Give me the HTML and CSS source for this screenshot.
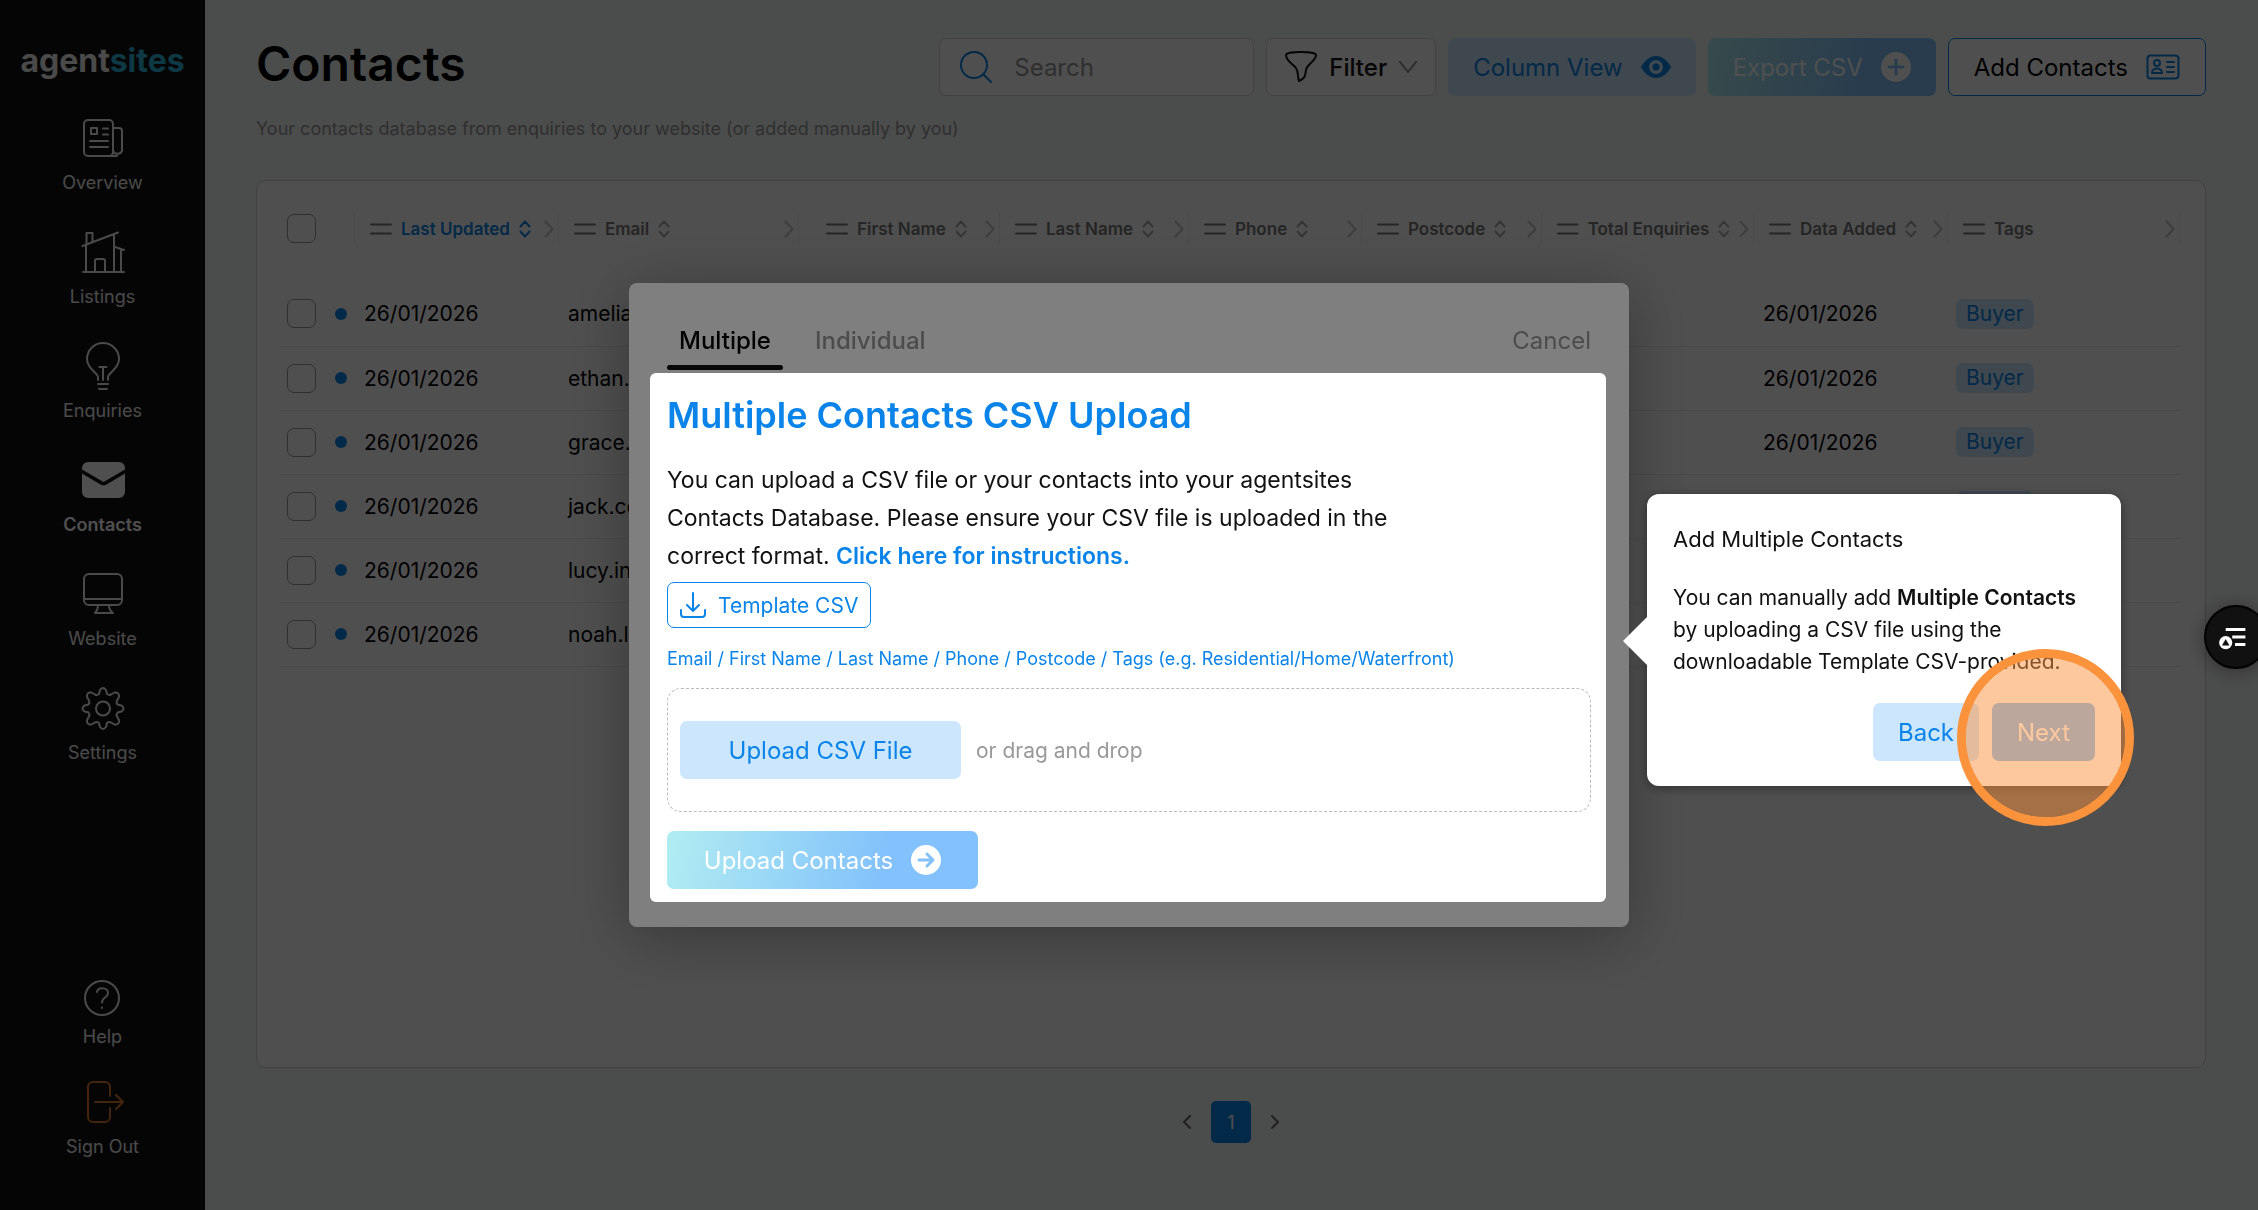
FILE: index.html
```
<!DOCTYPE html>
<html lang="en">
<head>
    <meta charset="UTF-8">
    <meta name="viewport" content="width=device-width, initial-scale=1.0">
    <title>Contacts - agentsites</title>
    <link rel="stylesheet" href="styles.css">
</head>
<body>
    <svg class="sprite" aria-hidden="true">
        <symbol id="i-sort" viewBox="0 0 12 18"><path d="M1.5 6.5 6 1.5l4.500 5M1.500 11.500l4.500 5 4.500-5"/></symbol>
        <symbol id="i-next" viewBox="0 0 10 18"><path d="M1.500 1.500 8.500 9l-7 7.500"/></symbol>
        <symbol id="i-grip" viewBox="0 0 22 12"><path d="M1 1.500h20M1 10.500h20"/></symbol>
    </svg>

    <div class="app">
        <aside class="sidebar">
            <a class="logo" href="#">agent<span>sites</span></a>
            <nav class="nav">
                <a class="nav-item" href="#">
                    <svg class="nav-icon" viewBox="0 0 48 48"><rect x="5" y="6" width="29" height="36" rx="4"/><path d="M34 14h6a3 3 0 0 1 3 3v20a5 5 0 0 1-9 0M12 14h6v6h-6zM24 14.500h5M24 20.500h5M11 27h18M11 33h18M30 42h8"/></svg>
                    <span>Overview</span>
                </a>
                <a class="nav-item" href="#">
                    <svg class="nav-icon" viewBox="0 0 48 48"><path d="M4 44h41M3.500 18 39 4.500M7 17v27M7.500 16V5h6v8.500M35 6v38M36 19l9 3M42 22v22M16 44V33a2 2 0 0 1 2-2h6a2 2 0 0 1 2 2v11"/></svg>
                    <span>Listings</span>
                </a>
                <a class="nav-item" href="#">
                    <svg class="nav-icon" viewBox="0 0 48 48"><path d="M19 38v-3c0-4-11-8-11-18a16 16 0 0 1 32 0c0 10-11 14-11 18v3M24 38V25M20.500 25h7M19 42h10M20 47h8"/></svg>
                    <span>Enquiries</span>
                </a>
                <a class="nav-item active" href="#">
                    <svg class="nav-icon solid" viewBox="0 0 48 48"><path d="M3 12a6 6 0 0 1 6-6h31a6 6 0 0 1 6 6v1.500L24.500 26 3 13.500z"/><path d="M3 17.500l18.500 11a6 6 0 0 0 6 0L46 17.500V36a6 6 0 0 1-6 6H9a6 6 0 0 1-6-6z"/></svg>
                    <span>Contacts</span>
                </a>
                <a class="nav-item" href="#">
                    <svg class="nav-icon" viewBox="0 0 48 48"><rect x="5" y="4" width="38" height="31" rx="5"/><path d="M5 29h38M19 35c0 4-1 6-3 8h18c-3-2-4-4-4-8"/></svg>
                    <span>Website</span>
                </a>
                <a class="nav-item" href="#">
                    <svg class="nav-icon" viewBox="0 0 48 48"><path d="M21 6q3-4 6 0l1 4q2 1.500 4 .5l3.500-2q5-.5 4.500 4.500l-2 3.500q-1 2 .5 4l4 1q4 3 0 6l-4 1q-1.500 2-.5 4l2 3.500q.5 5-4.500 4.500l-3.500-2q-2-1-4 .5l-1 4q-3 4-6 0l-1-4q-2-1.500-4-.5l-3.500 2q-5 .5-4.500-4.500l2-3.500q1-2-.5-4l-4-1q-4-3 0-6l4-1q1.500-2 .5-4l-2-3.500q-.5-5 4.500-4.500l3.500 2q2 1 4-.5z"/><circle cx="24" cy="24.500" r="7"/></svg>
                    <span>Settings</span>
                </a>
            </nav>
            <nav class="nav nav-bottom">
                <a class="nav-item help" href="#">
                    <svg class="nav-icon" viewBox="0 0 36 36"><circle cx="18" cy="18" r="17"/><path d="M13 12c1-5 11-5 11 1 0 5-6 4-6 9.500M18 27.500v.5"/></svg>
                    <span>Help</span>
                </a>
                <a class="nav-item sign-out" href="#">
                    <svg class="nav-icon" viewBox="0 0 48 48"><path d="M32 18V9a5 5 0 0 0-5-5H15a5 5 0 0 0-5 5v30a5 5 0 0 0 5 5h12a5 5 0 0 0 5-5v-9M17 24h28M38 17l7 7-7 7"/></svg>
                    <span>Sign Out</span>
                </a>
            </nav>
        </aside>

        <main class="main">
            <header class="page-head">
                <h1>Contacts</h1>
                <div class="toolbar">
                    <label class="search">
                        <svg class="icon" viewBox="0 0 32 32"><circle cx="14" cy="14" r="13"/><path d="M23 23l8 8"/></svg>
                        <input type="search" placeholder="Search" aria-label="Search">
                    </label>
                    <button class="btn btn-plain btn-filter">
                        <svg class="icon" viewBox="0 0 32 32"><path d="M1 4c0-4 30-4 30 0 0 6-9 9-10 15-1 5 0 8-7 11-2-5 0-9-3-13C8 13 1 10 1 4z"/></svg>
                        Filter
                        <svg class="caret" viewBox="0 0 18 12"><path d="M1 1l8 10 8-10"/></svg>
                    </button>
                    <button class="btn btn-soft">
                        Column View
                        <svg class="icon solid" viewBox="0 0 30 30"><path fill-rule="evenodd" d="M0 15C4 8 9 4 15 4s11 4 15 11c-4 7-9 11-15 11S4 22 0 15zm15-7a7 7 0 1 0 0 14 7 7 0 0 0 0-14z"/><circle cx="15" cy="15" r="3.500"/></svg>
                    </button>
                    <button class="btn btn-grad">
                        Export CSV
                        <svg class="icon" viewBox="0 0 30 30"><circle class="disc" cx="15" cy="15" r="15"/><path class="mark" d="M15 8v14M8 15h14"/></svg>
                    </button>
                    <button class="btn btn-outline">
                        Add Contacts
                        <svg class="icon card-icon" viewBox="0 0 34 26"><rect x="1.500" y="1.500" width="31" height="23" rx="3"/><circle cx="11" cy="9" r="3"/><path d="M6 19c0-6 10-6 10 0zM21 8h7M21 13h7M21 18h7"/></svg>
                    </button>
                </div>
            </header>
            <p class="subtitle">Your contacts database from enquiries to your website (or added manually by you)</p>

            <section class="card">
                <table class="contacts">
                    <colgroup>
                        <col class="c-check"><col class="c-updated"><col class="c-email"><col class="c-first"><col class="c-last"><col class="c-phone"><col class="c-post"><col class="c-total"><col class="c-added"><col>
                    </colgroup>
                    <thead>
                        <tr>
                            <th><input type="checkbox" aria-label="Select all"></th>
                            <th class="sorted"><div class="th"><svg class="grip"><use href="#i-grip"/></svg>Last Updated<svg class="sort"><use href="#i-sort"/></svg><svg class="next"><use href="#i-next"/></svg></div></th>
                            <th><div class="th"><svg class="grip"><use href="#i-grip"/></svg>Email<svg class="sort"><use href="#i-sort"/></svg><svg class="next"><use href="#i-next"/></svg></div></th>
                            <th class="wide"><div class="th"><svg class="grip"><use href="#i-grip"/></svg>First Name<svg class="sort"><use href="#i-sort"/></svg><svg class="next"><use href="#i-next"/></svg></div></th>
                            <th><div class="th"><svg class="grip"><use href="#i-grip"/></svg>Last Name<svg class="sort"><use href="#i-sort"/></svg><svg class="next"><use href="#i-next"/></svg></div></th>
                            <th><div class="th"><svg class="grip"><use href="#i-grip"/></svg>Phone<svg class="sort"><use href="#i-sort"/></svg><svg class="next"><use href="#i-next"/></svg></div></th>
                            <th><div class="th"><svg class="grip"><use href="#i-grip"/></svg>Postcode<svg class="sort"><use href="#i-sort"/></svg><svg class="next"><use href="#i-next"/></svg></div></th>
                            <th><div class="th"><svg class="grip"><use href="#i-grip"/></svg>Total Enquiries<svg class="sort"><use href="#i-sort"/></svg><svg class="next"><use href="#i-next"/></svg></div></th>
                            <th><div class="th"><svg class="grip"><use href="#i-grip"/></svg>Data Added<svg class="sort"><use href="#i-sort"/></svg><svg class="next"><use href="#i-next"/></svg></div></th>
                            <th><div class="th"><svg class="grip"><use href="#i-grip"/></svg>Tags<svg class="next"><use href="#i-next"/></svg></div></th>
                        </tr>
                    </thead>
                    <tbody>
                        <tr><td><div class="pick"><input type="checkbox" aria-label="Select amelia"><i class="dot"></i></div></td><td>26/01/2026</td><td>amelia</td><td></td><td></td><td></td><td></td><td></td><td>26/01/2026</td><td><span class="tag">Buyer</span></td></tr>
                        <tr><td><div class="pick"><input type="checkbox" aria-label="Select ethan"><i class="dot"></i></div></td><td>26/01/2026</td><td>ethan.</td><td></td><td></td><td></td><td></td><td></td><td>26/01/2026</td><td><span class="tag">Buyer</span></td></tr>
                        <tr><td><div class="pick"><input type="checkbox" aria-label="Select grace"><i class="dot"></i></div></td><td>26/01/2026</td><td>grace.</td><td></td><td></td><td></td><td></td><td></td><td>26/01/2026</td><td><span class="tag">Buyer</span></td></tr>
                        <tr><td><div class="pick"><input type="checkbox" aria-label="Select jack"><i class="dot"></i></div></td><td>26/01/2026</td><td>jack.co</td><td></td><td></td><td></td><td></td><td></td><td>26/01/2026</td><td><span class="tag">Buyer</span></td></tr>
                        <tr><td><div class="pick"><input type="checkbox" aria-label="Select lucy"><i class="dot"></i></div></td><td>26/01/2026</td><td>lucy.in</td><td></td><td></td><td></td><td></td><td></td><td>26/01/2026</td><td><span class="tag">Buyer</span></td></tr>
                        <tr><td><div class="pick"><input type="checkbox" aria-label="Select noah"><i class="dot"></i></div></td><td>26/01/2026</td><td>noah.l</td><td></td><td></td><td></td><td></td><td></td><td>26/01/2026</td><td><span class="tag">Buyer</span></td></tr>
                    </tbody>
                </table>
            </section>

            <div class="pager">
                <button aria-label="Previous page"><svg viewBox="0 0 10 14"><path d="M8 1L2 7l6 6"/></svg></button>
                <button class="current">1</button>
                <button aria-label="Next page"><svg viewBox="0 0 10 14"><path d="M2 1l6 6-6 6"/></svg></button>
            </div>
        </main>
    </div>

    <div class="backdrop">
        <div class="modal" role="dialog" aria-label="Add contacts">
            <div class="modal-head">
                <button class="tab active">Multiple</button>
                <button class="tab">Individual</button>
                <button class="cancel">Cancel</button>
            </div>
            <div class="panel">
                <h2>Multiple Contacts CSV Upload</h2>
                <p class="intro">You can upload a CSV file or your contacts into your agentsites Contacts Database. Please ensure your CSV file is uploaded in the correct format. <a href="#">Click here for instructions.</a></p>
                <button class="btn-template">
                    <svg viewBox="0 0 26 26"><path d="M13 1v18M7 13l6 6 6-6M1 18v4a3 3 0 0 0 3 3h18a3 3 0 0 0 3-3v-4"/></svg>
                    Template CSV
                </button>
                <p class="columns">Email / First Name / Last Name / Phone / Postcode / Tags (e.g. Residential/Home/Waterfront)</p>
                <div class="dropzone">
                    <button class="btn btn-soft btn-file">Upload CSV File</button>
                    <span>or drag and drop</span>
                </div>
                <button class="btn btn-grad btn-upload">
                    Upload Contacts
                    <svg class="icon" viewBox="0 0 30 30"><circle class="disc" cx="15" cy="15" r="15"/><path class="mark" d="M8 15h14M16 9l6 6-6 6"/></svg>
                </button>
            </div>
        </div>
    </div>

    <div class="tour">
        <h3>Add Multiple Contacts</h3>
        <p>You can manually add <b>Multiple Contacts</b><br>by uploading a CSV file using the<br>downloadable Template CSV-provided.</p>
        <div class="tour-actions">
            <button class="btn btn-soft">Back</button>
            <button class="btn btn-next">Next</button>
        </div>
        <div class="click-ring"></div>
    </div>

    <button class="widget" aria-label="Open guide">
        <svg viewBox="0 0 64 64"><path d="M21 24h21M28 32h14M31 40h11"/><circle class="disc" cx="21" cy="38" r="7"/><path class="tri" d="M21 34l4 7h-8z"/></svg>
    </button>
</body>
</html>
```
FILE: styles.css
```
:root {
    --blue: #0a84e8;
    --blue-soft: #cce6fd;
    --text: #111;
    --muted: #999;
    --line: #cdd1cf;
    --ring: #fb923c;
}

* {
    margin: 0;
    padding: 0;
    box-sizing: border-box;
}

body {
    background: #f2f7f4;
    color: var(--text);
    font-family: Inter, "Liberation Sans", sans-serif;
    font-size: 22px;
    height: 100vh;
    overflow: hidden;
}

button,
input {
    font: inherit;
    color: inherit;
}

button {
    background: none;
    border: none;
    cursor: pointer;
}

a {
    color: inherit;
    text-decoration: none;
}

svg {
    fill: none;
    stroke: currentColor;
    stroke-width: 2;
    stroke-linecap: round;
    stroke-linejoin: round;
}

.sprite {
    position: absolute;
    width: 0;
    height: 0;
}

.solid {
    fill: currentColor;
    stroke: none;
}

.app {
    display: flex;
    height: 100vh;
}

/* sidebar */
.sidebar {
    width: 205px;
    flex-shrink: 0;
    background: #111;
    color: #eee;
    display: flex;
    flex-direction: column;
    align-items: center;
    padding: 42px 0 52px;
}

.logo {
    font-size: 32px;
    font-weight: 700;
    line-height: 38px;
    margin-bottom: 34px;
}

.logo span {
    color: #2fb4dc;
}

.nav {
    display: flex;
    flex-direction: column;
    gap: 34px;
}

.nav-bottom {
    margin-top: auto;
    gap: 30px;
}

.nav-item {
    display: flex;
    flex-direction: column;
    align-items: center;
    gap: 10px;
    font-size: 18px;
    line-height: 22px;
}

.nav-item.active {
    font-weight: 600;
    color: #fff;
}

.nav-icon {
    width: 48px;
    height: 48px;
}

.help .nav-icon {
    width: 36px;
    height: 36px;
}

.sign-out .nav-icon {
    color: #d9782d;
}

/* page */
.main {
    flex: 1;
    min-width: 0;
    display: flex;
    flex-direction: column;
    padding: 38px 52px 67px 51px;
}

.page-head {
    display: flex;
    justify-content: space-between;
    height: 58px;
}

h1 {
    font-size: 48px;
    font-weight: 600;
    line-height: 52px;
    color: #000;
}

.toolbar {
    display: flex;
    gap: 12px;
}

.search,
.btn {
    height: 58px;
    border-radius: 7px;
    display: flex;
    align-items: center;
    justify-content: center;
}

.search {
    width: 315px;
    background: #fff;
    border: 1px solid var(--line);
    padding: 0 20px;
    gap: 22px;
}

.search input {
    width: 100%;
    border: none;
    background: none;
    outline: none;
    font-size: 24px;
}

.search input::placeholder {
    color: #999;
}

.icon {
    width: 30px;
    height: 30px;
    flex-shrink: 0;
}

.search .icon,
.btn-filter .icon {
    width: 32px;
    height: 32px;
}

.search .icon {
    color: var(--blue);
}

.btn {
    padding: 0 25px;
    gap: 18px;
    font-size: 24px;
    white-space: nowrap;
}

.btn-plain {
    background: #fff;
    border: 1px solid var(--line);
    padding: 0 18px;
    gap: 12px;
    font-weight: 500;
}

.caret {
    width: 18px;
    height: 12px;
    color: #888;
}

.btn-soft {
    background: var(--blue-soft);
    color: var(--blue);
}

.btn-grad {
    background: linear-gradient(100deg, #b0edf2, #82c1fb 70%);
    color: #fff;
}

.disc {
    fill: #fff;
    stroke: none;
}

.mark {
    stroke: #82c1fb;
    stroke-width: 3;
}

.btn-outline {
    background: #fff;
    border: 1px solid var(--blue);
    color: #000;
}

.card-icon {
    width: 34px;
    height: 26px;
    color: var(--blue);
}

.subtitle {
    margin-top: 21px;
    font-size: 18px;
    line-height: 24px;
    color: var(--muted);
}

/* contacts table */
.card {
    flex: 1;
    margin-top: 39px;
    background: #fff;
    border: 1px solid var(--line);
    border-radius: 10px;
    padding: 0 25px 0 23px;
}

.contacts {
    width: 100%;
    table-layout: fixed;
    border-collapse: collapse;
}

.c-check { width: 74px; }
.c-updated { width: 204px; }
.c-email { width: 240px; }
.c-first { width: 201px; }
.c-last { width: 189px; }
.c-phone { width: 173px; }
.c-post { width: 180px; }
.c-total { width: 212px; }
.c-added { width: 194px; }

.contacts th {
    height: 101px;
    padding: 0 0 6px;
    text-align: left;
    font-size: 17px;
    font-weight: 600;
    color: #777;
}

.contacts th:first-child {
    padding-left: 7px;
}

.th {
    display: flex;
    align-items: center;
    gap: 9px;
    height: 32px;
    padding: 0 4px 0 15px;
    border-left: 1px solid #eee;
    white-space: nowrap;
}

.contacts th:last-child .th {
    border-right: 1px solid #eee;
}

.wide .th {
    padding-left: 27px;
}

.sorted .th {
    color: var(--blue);
}

.grip {
    width: 22px;
    height: 12px;
    color: #777;
}

.sort {
    width: 12px;
    height: 18px;
}

th:not(.sorted) .sort {
    color: #aaa;
}

.contacts .next {
    width: 10px;
    height: 18px;
    margin-left: auto;
    color: #c4c4c4;
}

input[type="checkbox"] {
    appearance: none;
    display: block;
    width: 29px;
    height: 29px;
    border: 1px solid #999;
    border-radius: 7px;
}

.contacts td {
    height: 64px;
    padding: 0 0 0 10px;
    border-bottom: 1px solid #eee;
    font-size: 21px;
    color: #000;
}

.contacts td:first-child {
    padding-left: 7px;
}

.contacts td:last-child {
    padding-left: 9px;
}

.pick {
    display: flex;
    align-items: center;
    gap: 19px;
}

.dot {
    width: 12px;
    height: 12px;
    border-radius: 50%;
    background: var(--blue);
}

.tag {
    display: inline-block;
    padding: 0 10px;
    border-radius: 7px;
    background: var(--blue-soft);
    color: var(--blue);
    line-height: 30px;
}

.pager {
    display: flex;
    justify-content: center;
    align-items: center;
    gap: 4px;
    margin-top: 33px;
    color: #666;
}

.pager button {
    width: 40px;
    height: 42px;
    font-size: 18px;
}

.pager svg {
    width: 10px;
    height: 14px;
}

.pager .current {
    background: var(--blue);
    color: #fff;
    border-radius: 5px;
}

/* modal */
.backdrop {
    position: fixed;
    inset: 0;
    display: flex;
    align-items: center;
    justify-content: center;
    background: rgba(0, 0, 0, 0.38);
}

.modal {
    width: 1000px;
    padding: 20px 23px 25px 21px;
    background: #fff;
    border-radius: 8px;
    box-shadow: 0 10px 60px rgba(0, 0, 0, 0.3);
}

.modal-head {
    display: flex;
    height: 70px;
    padding: 0 15px 3px 17px;
    font-size: 24px;
}

.tab,
.cancel {
    padding-top: 12px;
    color: #999;
    border-bottom: 5px solid transparent;
}

.tab {
    padding-left: 12px;
    padding-right: 12px;
    margin-right: 20px;
    font-weight: 500;
}

.tab.active {
    color: #000;
    position: relative;
}

.tab.active::after {
    content: "";
    position: absolute;
    left: 0;
    right: 0;
    bottom: -5px;
    height: 5px;
    border-radius: 3px;
    background: #111;
}

.cancel {
    margin-left: auto;
}

/* spotlight on the upload panel, the spread shadow dims the rest */
.panel {
    position: relative;
    padding: 21px 15px 13px 17px;
    background: #fff;
    border-radius: 6px;
    box-shadow: 0 0 0 3000px rgba(0, 0, 0, 0.5);
}

h2 {
    font-size: 36px;
    font-weight: 600;
    line-height: 42px;
    color: var(--blue);
}

.intro {
    max-width: 780px;
    margin-top: 25px;
    font-size: 23px;
    line-height: 38px;
}

.intro a {
    color: var(--blue);
    font-weight: 600;
}

.btn-template {
    display: flex;
    align-items: center;
    gap: 12px;
    height: 46px;
    margin-top: 7px;
    padding: 0 12px;
    border: 1px solid var(--blue);
    border-radius: 7px;
    color: var(--blue);
    font-size: 21px;
}

.btn-template svg {
    width: 26px;
    height: 26px;
}

.columns {
    margin-top: 19px;
    font-size: 18px;
    line-height: 24px;
    color: var(--blue);
}

.dropzone {
    display: flex;
    align-items: center;
    gap: 15px;
    height: 124px;
    margin: 17px 0 19px;
    padding: 0 12px;
    border: 1px dashed #bbb;
    border-radius: 14px;
    color: #999;
    font-size: 21px;
}

.btn-file {
    width: 281px;
}

.btn-upload {
    width: 311px;
}

/* tour card */
.tour {
    position: fixed;
    top: 494px;
    right: 137px;
    width: 474px;
    padding: 27px 26px 25px;
    background: #fff;
    border-radius: 12px;
    box-shadow: 0 2px 12px rgba(0, 0, 0, 0.4);
}

.tour::before {
    content: "";
    position: absolute;
    left: -24px;
    top: 122px;
    border: 25px solid transparent;
    border-left: none;
    border-right: 25px solid #fff;
}

.tour h3 {
    font-size: 22px;
    font-weight: 400;
    line-height: 36px;
}

.tour p {
    margin-top: 25px;
    font-size: 21px;
    line-height: 32px;
    white-space: nowrap;
}

.tour b {
    font-weight: 600;
}

.tour-actions {
    display: flex;
    justify-content: flex-end;
    gap: 13px;
    margin-top: 25px;
}

.btn-next {
    background: #7bbcfb;
    color: #fff;
}

.click-ring {
    position: absolute;
    right: -13px;
    bottom: -40px;
    width: 177px;
    height: 177px;
    border: 9px solid var(--ring);
    border-radius: 50%;
    background: rgba(251, 146, 60, 0.5);
    background-clip: padding-box;
}

.widget {
    position: fixed;
    right: -10px;
    top: 605px;
    width: 64px;
    height: 64px;
    border: 2px solid #000;
    border-radius: 50%;
    background: #111;
    color: #fff;
    box-shadow: 0 2px 20px rgba(0, 0, 0, 0.4);
}

.widget svg {
    width: 60px;
    height: 60px;
    stroke-width: 3;
    stroke-linecap: butt;
}

.widget .tri {
    fill: #111;
    stroke: none;
}
```
